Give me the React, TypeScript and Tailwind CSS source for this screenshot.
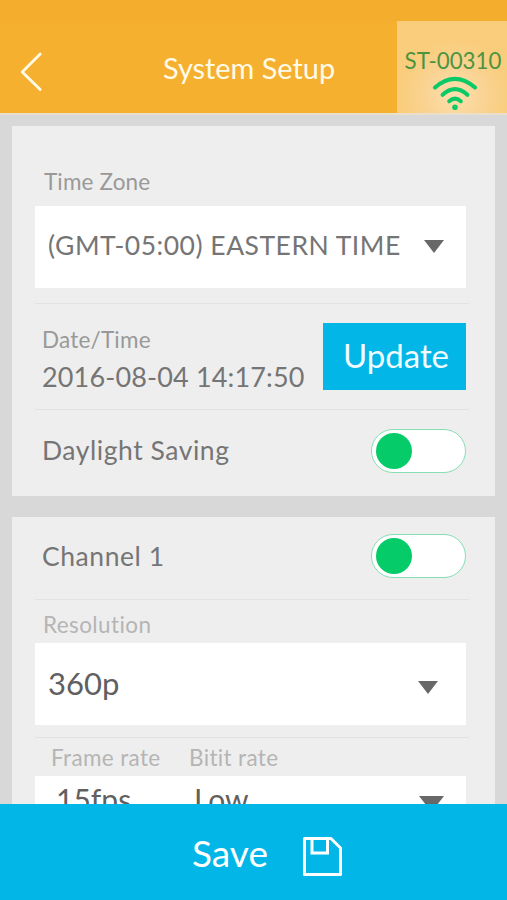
import React, { useState } from 'react';
import clsx from 'clsx';

interface ToggleProps {
    label: string;
    on: boolean;
    onChange: (on: boolean) => void;
}

const Caret: React.FC<{ wide?: boolean }> = ({ wide }) => (
    <svg
        viewBox="0 0 20 13"
        preserveAspectRatio="none"
        className={clsx('shrink-0 text-[#686868]', wide ? 'w-[25px] h-[16px]' : 'w-[20px] h-[13px]')}
    >
        <path d="M0 0h20L10 13z" fill="currentColor" />
    </svg>
);

const Divider = () => <div className="w-[434px] h-px shrink-0 bg-[#e2e2e2]" />;

const Toggle: React.FC<ToggleProps> = ({ label, on, onChange }) => (
    <button
        type="button"
        role="switch"
        aria-checked={on}
        aria-label={label}
        onClick={() => onChange(!on)}
        className={clsx(
            'flex items-center w-[95px] h-[44px] px-1 rounded-full border border-[#86dfb2] bg-white',
            on ? 'justify-start' : 'justify-end',
        )}
    >
        <span className="size-9 rounded-full bg-[#05cb69]" />
    </button>
);

const WifiIcon = () => (
    <svg viewBox="0 0 46 36" className="w-[46px] h-[36px]" fill="none" stroke="#0bc966" strokeWidth="4.1" strokeLinecap="round">
        <path d="M3 12.5Q23 -4.8 43 12.5" />
        <path d="M10.6 19.8Q23 8.4 35.4 19.8" />
        <path d="M17.2 26.2Q23 21.2 28.8 26.2" />
        <circle cx="23" cy="32.3" r="2.8" fill="#0bc966" stroke="none" />
    </svg>
);

const SaveIcon = () => (
    <svg viewBox="0 0 39 39" className="w-[39px] h-[39px]" fill="none" stroke="white" strokeWidth="3" strokeLinejoin="round">
        <path d="M1.5 1.5H28L37.5 11V37.5H1.5z" />
        <path d="M9 1.5V16H24.5V1.5" strokeLinejoin="miter" />
    </svg>
);

export default function App() {
    const [daylight, setDaylight] = useState(true);
    const [channel, setChannel] = useState(true);

    return (
        <div className="flex flex-col w-[507px] h-[900px] overflow-hidden bg-[#d8d8d8] font-['Lato',sans-serif] leading-none text-[#757575] whitespace-nowrap">
            <header className="shrink-0 h-[115px] bg-[#f6b02f] border-b-2 border-[#e9dfca]">
                <div className="h-[21px] bg-[#f4ad2d]" />
                <div className="flex h-[92px] text-[#fffbe8]">
                    <button type="button" aria-label="Back" className="flex items-start w-[163px] pt-[31px] pl-[20px]">
                        <svg viewBox="0 0 23 40" className="w-[23px] h-[40px]" fill="none" stroke="currentColor" strokeWidth="2.8" strokeLinecap="round" strokeLinejoin="round">
                            <path d="M20.2 2L2.2 20L20.2 37.5" />
                        </svg>
                    </button>
                    <h1 className="w-[234px] pt-[32px] text-[28.9px] leading-[29px]">System Setup</h1>
                    <div className="flex flex-col items-center w-[110px] pt-[28px] bg-[radial-gradient(circle_at_58px_74px,#fbdfae_0,#fad393_30px,#f9cd7b_56px)]">
                        <span className="pl-[2px] text-[22.3px] leading-[23px] text-[#4c9440]">ST-00310</span>
                        <div className="pl-[6px] mt-[3px]">
                            <WifiIcon />
                        </div>
                    </div>
                </div>
            </header>

            <main className="flex-1 min-h-0 overflow-hidden pt-[11px] pl-3">
                <section className="w-[482.5px] h-[369.5px] pl-[23px] bg-[#eee]">
                    <div className="h-[80px] pt-[45px] pl-[9px] text-[22.5px] leading-[22px] tracking-[0.15px] text-[#999]">Time Zone</div>
                    <div className="flex items-center w-[430.5px] h-[81.5px] pl-[13px] pr-[22px] bg-white">
                        <span className="flex-1 pb-[4px] text-[26.5px] leading-[26px] tracking-[0.5px]">(GMT-05:00) EASTERN TIME</span>
                        <Caret />
                    </div>
                    <div className="h-[15.5px]" />
                    <Divider />
                    <div className="flex justify-between w-[430.5px] h-[105px] pl-[7px] pt-[19px]">
                        <div className="pt-[6px]">
                            <div className="text-[22.5px] leading-[22px] tracking-[0.2px] text-[#999]">Date/Time</div>
                            <div className="mt-[12px] text-[27px] tracking-[0.15px]">2016-08-04 14:17:50</div>
                        </div>
                        <button type="button" className="w-[143px] h-[66.5px] pl-[4px] pb-[2px] bg-[#02b6e8] text-[33px] text-[#effbff]">
                            Update
                        </button>
                    </div>
                    <Divider />
                    <div className="flex items-center justify-between w-[431px] h-[81px] pl-[7px]">
                        <span className="pb-[1px] text-[26.5px] tracking-[0.55px]">Daylight Saving</span>
                        <Toggle label="Daylight Saving" on={daylight} onChange={setDaylight} />
                    </div>
                </section>

                <section className="w-[482.5px] h-[400px] mt-[21.5px] pl-[23px] bg-[#eee]">
                    <div className="flex items-center justify-between w-[431px] h-[82px] pl-[7px] pb-[5px]">
                        <span className="text-[26.5px] leading-[26px] tracking-[0.55px]">Channel 1</span>
                        <Toggle label="Channel 1" on={channel} onChange={setChannel} />
                    </div>
                    <Divider />
                    <div className="h-[43px] pt-[14px] pl-[8px] text-[22.5px] leading-[22px] tracking-[0.4px] text-[#b5b5b5]">Resolution</div>
                    <div className="flex items-center w-[430.5px] h-[81.5px] pl-[13px] pr-[28px] bg-white text-[#606060]">
                        <span className="flex-1 text-[31px]">360p</span>
                        <div className="pt-[7px]">
                            <Caret />
                        </div>
                    </div>
                    <div className="h-[12px]" />
                    <Divider />
                    <div className="flex h-[38.5px] pt-[9px] pl-[16px] text-[22.5px] leading-[22px] tracking-[0.35px] text-[#b5b5b5]">
                        <span className="w-[138px]">Frame rate</span>
                        <span>Bitit rate</span>
                    </div>
                    <div className="flex items-start w-[430.5px] h-[81.5px] pt-[8px] pl-[21px] pr-[22px] bg-white text-[30px] text-[#606060]">
                        <span className="w-[138px]">15fps</span>
                        <span className="flex-1">Low</span>
                        <div className="pt-[11.5px]">
                            <Caret wide />
                        </div>
                    </div>
                </section>
            </main>

            <footer className="shrink-0 h-[96.5px] bg-[#02b6e8]">
                <button type="button" className="flex items-start w-full h-full pt-[33px] pl-[192px] text-white">
                    <span className="w-[111px] text-left text-[37px] leading-[32px]">Save</span>
                    <SaveIcon />
                </button>
            </footer>
        </div>
    );
}
